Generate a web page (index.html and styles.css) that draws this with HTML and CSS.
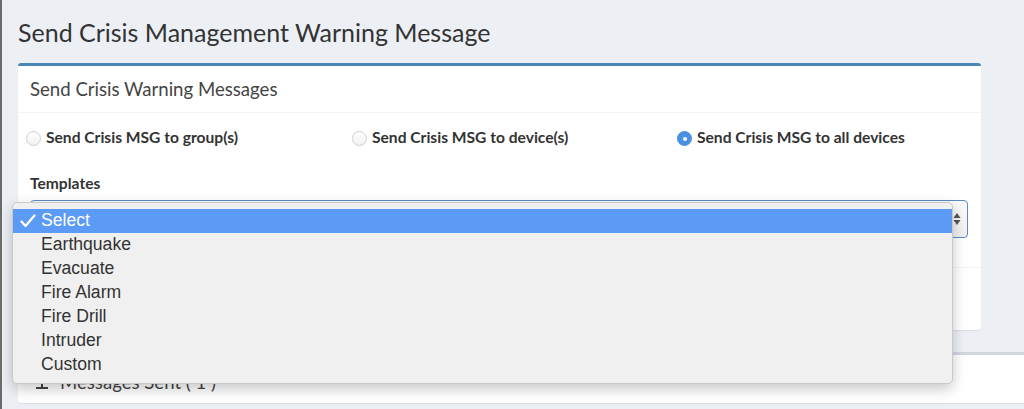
FILE: index.html
```html
<!DOCTYPE html>
<html lang="en">
<head>
    <meta charset="UTF-8">
    <title>Send Crisis Management Warning Message</title>
    <link rel="stylesheet" href="styles.css">
</head>
<body>

<div class="page">

    <section class="content-header">
        <h1>Send Crisis Management Warning Message</h1>
    </section>

    <section class="content">

        <div class="box box-primary">
            <div class="box-header">
                <h3 class="box-title">Send Crisis Warning Messages</h3>
            </div>
            <div class="box-body">
                <div class="radios">
                    <label class="radio"><span class="dot"></span>Send Crisis MSG to group(s)</label>
                    <label class="radio"><span class="dot"></span>Send Crisis MSG to device(s)</label>
                    <label class="radio"><span class="dot checked"></span>Send Crisis MSG to all devices</label>
                </div>
                <div class="field">
                    <div class="field-label">Templates</div>
                    <div class="select">
                        <svg class="arrows" width="8" height="14" viewBox="0 0 8 14">
                            <path d="M4 1 L7.5 6 L0.5 6 Z" fill="#555"/>
                            <path d="M4 13 L7.5 8 L0.5 8 Z" fill="#555"/>
                        </svg>
                    </div>
                </div>
            </div>
            <div class="box-footer"></div>
        </div>

        <div class="box box-default">
            <div class="box-header">
                <svg class="box-icon" width="12" height="14" viewBox="0 0 12 14">
                    <path d="M6 0 V13 M0 13 H12" stroke="#444" stroke-width="2" fill="none"/>
                </svg>
                <h3 class="box-title">Messages Sent ( 1 )</h3>
            </div>
        </div>

    </section>

    <!-- open native select popup -->
    <ul class="menu">
        <li class="selected">
            <svg class="check" width="16" height="14" viewBox="0 0 16 14">
                <path d="M1.5 7.5 L5.5 12 L14.5 1.5" stroke="#fff" stroke-width="2.3" fill="none" stroke-linecap="round" stroke-linejoin="round"/>
            </svg>Select
        </li>
        <li>Earthquake</li>
        <li>Evacuate</li>
        <li>Fire Alarm</li>
        <li>Fire Drill</li>
        <li>Intruder</li>
        <li>Custom</li>
    </ul>

</div>

</body>
</html>
```

FILE: styles.css
```css
body {
    margin: 0;
    background-color: #ecf0f5;
    font-family: Lato, "Open Sans", sans-serif;
    color: #333;
}

.page {
    position: relative;
    height: 409px;
    overflow: hidden;
    border-left: 2px solid #6b6b6b;
}

.content-header {
    padding: 17px 16px 0;
}
.content-header h1 {
    margin: 0;
    font-size: 25px;
    font-weight: 400;
    line-height: 30px;
}

.content {
    padding: 16px 0 0 16px;
}

.box {
    background-color: #fff;
    border-radius: 3px;
    border-top: 3px solid #d2d6de;
    margin-bottom: 22px;
    box-shadow: 0 1px 1px rgba(0, 0, 0, 0.08);
}
.box-primary {
    width: 963px;
    border-top-color: #4a87b9;
}
.box-default {
    margin-right: -30px;
}

.box-header {
    display: flex;
    align-items: center;
    padding: 12px 12px;
    border-bottom: 1px solid #f4f4f4;
}
.box-title {
    margin: 0;
    font-size: 18.6px;
    font-weight: 400;
    line-height: 22px;
    color: #444;
}
.box-default .box-header {
    border-bottom: none;
    padding: 16px 18px 10px;
}
.box-icon {
    margin-right: 12px;
}

.box-body {
    padding: 15px 13px 29px 8px;
}

.radios {
    display: grid;
    grid-template-columns: 326px 325px 1fr;
}
.radio {
    display: flex;
    align-items: center;
    font-size: 15.6px;
    font-weight: 700;
    color: #333;
}
.dot {
    width: 13px;
    height: 13px;
    border-radius: 50%;
    border: 1px solid #cfcfcf;
    background: linear-gradient(#fff, #f1f1f1);
    margin: 3px 5px 0 0;
    box-sizing: content-box;
}
.dot.checked {
    border-color: #4a90e2;
    background: #4a90e2;
    position: relative;
}
.dot.checked::after {
    content: "";
    position: absolute;
    left: 4.5px;
    top: 4.5px;
    width: 4px;
    height: 4px;
    border-radius: 50%;
    background: #fff;
}

.field {
    margin: 28px 0 0 4px;
}
.field-label {
    font-size: 15.6px;
    font-weight: 700;
    line-height: 18px;
    margin-bottom: 8px;
}

.select {
    height: 36px;
    border: 1px solid #5a8dc4;
    border-radius: 4px;
    background: linear-gradient(#fbfbfb, #efefef);
    display: flex;
    align-items: center;
    justify-content: flex-end;
    padding-right: 6px;
}

.box-footer {
    height: 62px;
    border-top: 1px solid #f4f4f4;
}

.menu {
    position: absolute;
    left: 10px;
    top: 202px;
    width: 939px;
    margin: 0;
    padding: 6px 0;
    list-style: none;
    background-color: #f0f0f0;
    border: 1px solid #c9c9c9;
    border-radius: 5px;
    box-shadow: 0 5px 14px rgba(0, 0, 0, 0.22);
    font-family: "Liberation Sans", Arial, sans-serif;
    font-size: 17.6px;
    color: #333;
}
.menu li {
    height: 24px;
    line-height: 23px;
    padding-left: 28px;
    position: relative;
}
.menu .selected {
    background-color: #5b9af5;
    color: #fff;
}
.menu .check {
    position: absolute;
    left: 7px;
    top: 5px;
}
```
